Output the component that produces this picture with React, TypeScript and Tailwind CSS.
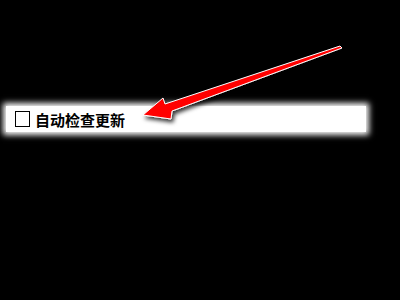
import React from "react";

export default function App() {
  return (
    <div className="relative w-[400px] h-[300px] bg-black overflow-hidden pt-[106px] px-[6px]">
      {/* Highlighted option row */}
      <div className="h-[26px] w-[360px] bg-white shadow-[0_0_6px_3px_#fff] flex items-center pl-[9px]">
        <div className="w-[15px] h-[16px] border-[1.5px] border-black bg-white" />
        <span
          className="ml-[5px] text-[15px] leading-none font-bold text-black"
          style={{ fontFamily: '"Noto Sans CJK SC", sans-serif' }}
        >
          自动检查更新
        </span>
      </div>

      {/* Red pointer arrow */}
      <svg
        className="absolute left-0 top-0"
        width="400"
        height="300"
        viewBox="0 0 400 300"
      >
        <defs>
          <filter id="sh" x="-20%" y="-20%" width="140%" height="140%">
            <feDropShadow dx="2" dy="3" stdDeviation="2" floodColor="#000" floodOpacity="0.8" />
          </filter>
        </defs>
        <polygon
          points="143,115 163,98 165,104 340,46 342,48 172,111 171,119"
          fill="#ff0000"
          stroke="#fff"
          strokeWidth="1"
          strokeLinejoin="round"
          filter="url(#sh)"
        />
      </svg>
    </div>
  );
}
